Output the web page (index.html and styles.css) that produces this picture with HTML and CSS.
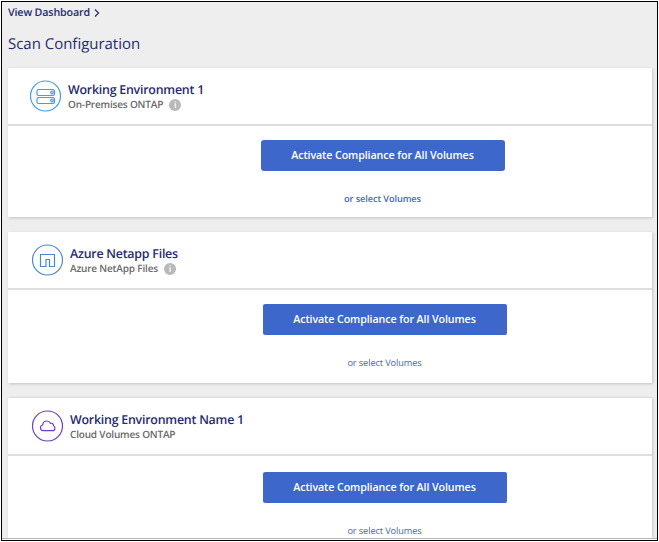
FILE: index.html
```html
<!DOCTYPE html>
<html lang="en">
<head>
<meta charset="utf-8">
<title>Scan Configuration</title>
<link rel="stylesheet" href="styles.css">
</head>
<body>
<main class="page">
  <a class="crumb"><span>View Dashboard</span>
    <svg class="chevron" width="6" height="8" viewBox="0 0 6 8"><path d="M1 .5 4.600 4 1 7.500"/></svg>
  </a>
  <h1 class="heading">Scan Configuration</h1>

  <section class="card card-onprem">
    <header class="card-head">
      <svg class="icon" width="32" height="32" viewBox="0 0 32 32">
        <circle cx="15.500" cy="16" r="15"/>
        <rect x="7" y="9.500" width="17.500" height="6" rx="1.500"/>
        <rect x="7" y="17.500" width="17.500" height="6" rx="1.500"/>
        <circle cx="22" cy="12.500" r="1.300"/>
        <circle cx="22" cy="20.500" r="1.300"/>
      </svg>
      <div class="names">
        <h2 class="title">Working Environment 1</h2>
        <p class="kind">On-Premises ONTAP <span class="info">i</span></p>
      </div>
    </header>
    <div class="card-body">
      <button class="activate">Activate Compliance for All Volumes</button>
      <a class="select">or select Volumes</a>
    </div>
  </section>

  <section class="card card-azure">
    <header class="card-head">
      <svg class="icon" width="32" height="32" viewBox="0 0 32 32">
        <circle cx="15.500" cy="16" r="15"/>
        <path d="M8.500 10.500h14v12h-5v-7h-3.500v7H8.500z"/>
      </svg>
      <div class="names">
        <h2 class="title">Azure Netapp Files</h2>
        <p class="kind">Azure NetApp Files <span class="info">i</span></p>
      </div>
    </header>
    <div class="card-body">
      <button class="activate">Activate Compliance for All Volumes</button>
      <a class="select">or select Volumes</a>
    </div>
  </section>

  <section class="card card-cloud">
    <header class="card-head">
      <svg class="icon" width="32" height="32" viewBox="0 0 32 32">
        <circle cx="15.500" cy="16" r="15"/>
        <path d="M11 20.700a2.900 2.900 0 0 1-.3-5.700c.2-2.500 2-4 4.100-4 1.800 0 3 .8 3.700 2.300 1.900-.3 3 .8 3 2.500 2.200.8 1.900 4.900-1 4.900z"/>
      </svg>
      <div class="names">
        <h2 class="title">Working Environment Name 1</h2>
        <p class="kind">Cloud Volumes ONTAP</p>
      </div>
    </header>
    <div class="card-body">
      <button class="activate">Activate Compliance for All Volumes</button>
      <a class="select">or select Volumes</a>
    </div>
  </section>
</main>
</body>
</html>
```
FILE: styles.css
```css
* { box-sizing: border-box; margin: 0; padding: 0; }
html, body { height: 542px; overflow: hidden; background: #fff; }
body { padding: 1px; font-family: "Open Sans", sans-serif; color: #262b72; text-rendering: geometricPrecision; }
.page {
  display: flex;
  flex-direction: column;
  width: 657px;
  height: 540px;
  padding: 0 5px 0 6px;
  border: 1px solid #000;
  background: linear-gradient(#b4b4b4, #b4b4b4) 0 536px / 100% 1px no-repeat,
    linear-gradient(#fff, #fff) 0 537px / 100% 1px no-repeat, #eee;
  overflow: hidden;
}
.crumb { display: flex; align-items: center; height: 21px; font-size: 10.700px; font-weight: 600; line-height: 22px; letter-spacing: -.14px; white-space: nowrap; }
.chevron { margin-left: 4px; fill: none; stroke: #262b72; stroke-width: 1.2; }
.heading { height: 45px; font-size: 15px; font-weight: 400; line-height: 43px; letter-spacing: -.02px; white-space: nowrap; }

.card { flex: none; width: 644px; background: #fff; box-shadow: 1px 1px 3px rgba(0, 0, 0, .18); }
.card-onprem { height: 149px; margin-bottom: 15px; }
.card-azure { height: 151px; margin-bottom: 15px; }
.card-cloud { height: 140px; box-shadow: 1px 0 3px rgba(0, 0, 0, .18); clip-path: inset(-2px -4px 0 -4px); }

.card-head { display: flex; height: 58px; padding: 12px 0 0 24px; border-bottom: 2px solid #dedede; }
.card-onprem .card-head { padding-left: 22px; }
.icon { flex: none; margin-right: 6px; fill: none; stroke-width: 1.2; }
.card-onprem .icon { stroke: #3f9eea; }
.card-azure .icon { stroke: #4a86d4; }
.card-cloud .icon { stroke: #6a3fc4; }
.title { height: 17px; font-size: 12.400px; font-weight: 600; line-height: 19px; letter-spacing: -.23px; white-space: nowrap; }
.kind { display: flex; align-items: center; height: 15px; font-size: 10px; font-weight: 600; line-height: 15px; letter-spacing: -.18px; color: #6a6a6a; white-space: nowrap; }
.info {
  width: 12px;
  height: 12px;
  margin-left: 6px;
  border-radius: 50%;
  background: #b9b9b9;
  color: #fff;
  font-size: 9px;
  line-height: 12px;
  text-align: center;
}

.card-body { display: flex; flex-direction: column; align-items: center; padding: 14px 0 0 109px; }
.card-onprem .card-body { padding-left: 105px; }
.card-cloud .card-body { padding-top: 16px; }
.activate {
  width: 244px;
  height: 31px;
  padding-bottom: 1px;
  border: 0;
  border-radius: 2px;
  background: #3d67ca;
  color: #fff;
  font: 600 10.700px/29px "Open Sans", sans-serif;
  letter-spacing: -.1px;
}
.card-onprem .activate { border-radius: 3px; }
.select { margin-top: 18px; font-size: 9.200px; line-height: 20px; letter-spacing: -.09px; color: #3f68c8; }
.card-onprem .select { font-weight: 600; }
```
